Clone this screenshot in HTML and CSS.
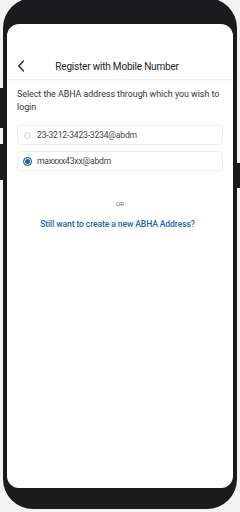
FILE: index.html
```html
<!DOCTYPE html>
<html lang="en">
<head>
    <meta charset="UTF-8">
    <meta name="viewport" content="width=device-width, initial-scale=1.0">
    <title>Register with Mobile Number</title>
    <link rel="stylesheet" href="styles.css">
</head>
<body>
    <div class="phone">
        <span class="side-btn left one"></span>
        <span class="side-btn left two"></span>
        <span class="side-btn right one"></span>
        <div class="screen">
            <div class="header">
                <svg class="back" width="8" height="12" viewBox="0 0 8 12">
                    <path d="M6.5 1 L1.8 6 L6.5 11" fill="none" stroke="#222" stroke-width="1.3" stroke-linecap="round" stroke-linejoin="round"/>
                </svg>
                <span class="title">Register with Mobile Number</span>
            </div>
            <div class="content">
                <p class="intro">Select the ABHA address through which you wish to login</p>
                <div class="options">
                    <label class="option">
                        <span class="radio"></span>
                        <span>23-3212-3423-3234@abdm</span>
                    </label>
                    <label class="option">
                        <span class="radio checked"></span>
                        <span>maxxxx43xx@abdm</span>
                    </label>
                </div>
                <div class="or">OR</div>
                <a class="create" href="#">Still want to create a new ABHA Address?</a>
            </div>
        </div>
    </div>
</body>
</html>
```

FILE: styles.css
```css
body {
    margin: 0;
    padding: 0;
    width: 240px;
    height: 512px;
    overflow: hidden;
    background: #f3f3f3;
    font-family: Roboto, "Noto Sans", sans-serif;
    color: #222;
}

.phone {
    position: relative;
    margin: -2px 3px 0;
    height: 511px;
    box-sizing: border-box;
    padding: 26px 4px 22px;
    background: #1b1b1d;
    border-radius: 30px;
}

.side-btn {
    position: absolute;
    width: 3px;
    background: #1b1b1d;
}

.side-btn.left {
    left: -3px;
}

.side-btn.right {
    right: -3px;
}

.side-btn.left.one {
    top: 90px;
    height: 40px;
}

.side-btn.left.two {
    top: 146px;
    height: 36px;
}

.side-btn.right.one {
    top: 165px;
    height: 25px;
}

.screen {
    height: 464px;
    background: #fff;
    border-radius: 12px;
    overflow: hidden;
}

.header {
    display: flex;
    align-items: center;
    height: 24px;
    padding: 30px 10px 1px;
    border-bottom: 1px solid #f2f2f2;
    box-shadow: 0 1px 2px rgba(0, 0, 0, 0.03);
}

.back {
    flex: none;
}

.title {
    flex: 1;
    text-align: center;
    font-size: 10px;
    letter-spacing: -0.2px;
    color: #222;
    padding-right: 14px;
}

.content {
    padding: 8px 10px;
}

.intro {
    margin: 0;
    font-size: 8.9px;
    letter-spacing: -0.03px;
    line-height: 13px;
    color: #333;
}

.options {
    display: flex;
    flex-direction: column;
    gap: 6px;
    margin-top: 11px;
}

.option {
    display: flex;
    align-items: center;
    gap: 6px;
    height: 18px;
    padding: 0 6px;
    border: 1px solid #ececec;
    border-radius: 4px;
    font-size: 8.6px;
    letter-spacing: -0.2px;
    color: #444;
}

.radio {
    width: 7px;
    height: 7px;
    border: 1px solid #d4d4d4;
    border-radius: 50%;
    box-sizing: border-box;
}

.radio.checked {
    width: 9px;
    height: 9px;
    margin-left: -1px;
    margin-right: -1px;
    border: 1.5px solid #1d63a5;
    background: #1d63a5;
    box-shadow: inset 0 0 0 1px #fff;
}

.or {
    margin-top: 29px;
    text-align: center;
    font-size: 6px;
    color: #666;
}

.create {
    display: block;
    margin-top: 12px;
    padding-right: 5px;
    text-align: center;
    font-size: 8.6px;
    letter-spacing: -0.12px;
    font-weight: 500;
    color: #1a6aa8;
    text-decoration: none;
}
```
